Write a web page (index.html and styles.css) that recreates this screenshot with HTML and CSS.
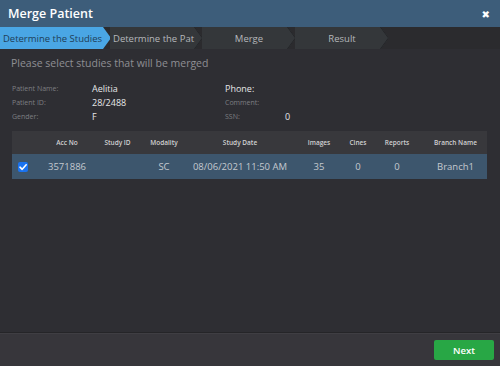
FILE: index.html
```html
<!DOCTYPE html>
<html>
<head>
<meta charset="utf-8">
<link rel="stylesheet" href="styles.css">
</head>
<body>
<div class="dialog">
  <div class="header">
    <span class="title">Merge Patient</span>
    <span class="close">&#10006;</span>
  </div>
  <div class="steps">
    <div class="step active s1"><span>Determine the Studies</span></div>
    <div class="step s2"><span>Determine the Pat</span></div>
    <div class="step s3"><span>Merge</span></div>
    <div class="step s4"><span>Result</span></div>
  </div>
  <div class="body">
    <div class="intro">Please select studies that will be merged</div>
    <div class="info">
      <div class="col">
        <div class="row"><span class="lbl">Patient Name:</span><span class="val">Aelitia</span></div>
        <div class="row"><span class="lbl">Patient ID:</span><span class="val">28/2488</span></div>
        <div class="row"><span class="lbl">Gender:</span><span class="val">F</span></div>
      </div>
      <div class="col col2">
        <div class="row"><span class="val">Phone:</span></div>
        <div class="row"><span class="lbl">Comment:</span></div>
        <div class="row"><span class="lbl">SSN:</span><span class="val">0</span></div>
      </div>
    </div>
    <table class="grid">
      <thead>
        <tr>
          <th class="c-chk"></th>
          <th class="c-acc">Acc No</th>
          <th class="c-sid">Study ID</th>
          <th class="c-mod">Modality</th>
          <th class="c-date">Study Date</th>
          <th class="c-img">Images</th>
          <th class="c-cin">Cines</th>
          <th class="c-rep">Reports</th>
          <th class="c-br">Branch Name</th>
        </tr>
      </thead>
      <tbody>
        <tr class="sel">
          <td class="c-chk"><span class="chk"><svg viewBox="0 0 10 10" width="10" height="10"><path d="M2 5.2 L4.2 7.3 L8.2 2.8" fill="none" stroke="#fff" stroke-width="1.6" stroke-linecap="round" stroke-linejoin="round"/></svg></span></td>
          <td>3571886</td>
          <td></td>
          <td>SC</td>
          <td>08/06/2021 11:50 AM</td>
          <td>35</td>
          <td>0</td>
          <td>0</td>
          <td>Branch1</td>
        </tr>
      </tbody>
    </table>
  </div>
  <div class="footer">
    <button class="next">Next</button>
  </div>
</div>
</body>
</html>
```
FILE: styles.css
```css
* { box-sizing: border-box; }
html, body { margin: 0; padding: 0; }
body {
  width: 500px;
  height: 366px;
  background: #2e2e33;
  font-family: "Open Sans", "DejaVu Sans", sans-serif;
  overflow: hidden;
}
.dialog {
  display: flex;
  flex-direction: column;
  height: 366px;
}
.header {
  height: 27px;
  background: #3d5d7a;
  display: flex;
  align-items: center;
  justify-content: space-between;
  padding: 0 10px 0 8px;
}
.title {
  color: #fff;
  font-size: 12.5px;
  font-weight: 600;
}
.close {
  color: #fff;
  font-size: 10px;
  font-weight: bold;
}
.steps {
  height: 22px;
  background: #2b2b2e;
  display: flex;
}
.step {
  position: relative;
  height: 22px;
  display: flex;
  align-items: center;
  justify-content: center;
  background: #34373a;
  color: #b5b7ba;
  font-size: 9.5px;
  clip-path: polygon(0 0, calc(100% - 8px) 0, 100% 50%, calc(100% - 8px) 100%, 0 100%);
}
.step::after {
  content: "";
  position: absolute;
  right: 0;
  top: 0;
  width: 9px;
  height: 22px;
  background: #232427;
  clip-path: polygon(0 0, 1px 0, 9px 50%, 1px 100%, 0 100%, 8px 50%);
}
.step span { white-space: nowrap; }
.step.active {
  background: #4aa6e4;
  color: #1f3e57;
}
.step.active::after { display: none; }
.s1 { width: 111px; padding-right: 6px; }
.s2 { width: 93px; margin-left: -1px; padding: 0 8px 0 3px; justify-content: flex-start; }
.s3 { width: 94px; margin-left: -1px; }
.s4 { width: 94px; margin-left: -1px; }
.body {
  flex: 1;
  padding: 0 12px;
  border-bottom: 1px solid #252528;
}
.intro {
  color: #8e8f93;
  font-size: 10.5px;
  margin: 7px 0 0 -1px;
  height: 14px;
  line-height: 14px;
}
.info {
  display: flex;
  margin-top: 11px;
}
.col { width: 213px; }
.row {
  height: 14px;
  display: flex;
  align-items: center;
}
.lbl {
  color: #7d7e82;
  font-size: 7px;
  width: 80px;
}
.col2 .lbl { width: 60px; }
.val {
  color: #e6e6e8;
  font-size: 9px;
}
.grid {
  margin-top: 8px;
  width: 475px;
  border-collapse: collapse;
  table-layout: fixed;
}
.grid th {
  background: #38383c;
  color: #d0d0d2;
  font-size: 6.5px;
  font-weight: 600;
  height: 23px;
  text-align: center;
  padding: 0;
}
.grid td {
  height: 25px;
  color: #c4c9cf;
  font-size: 9.5px;
  text-align: center;
  padding: 0;
}
.grid tr.sel { background: #3d566d; }
.c-chk { width: 27px; }
.c-acc { width: 56px; }
.c-sid { width: 45px; }
.c-mod { width: 48px; }
.c-date { width: 104px; }
.c-img { width: 54px; }
.c-cin { width: 24px; }
.c-rep { width: 54px; }
.c-br { width: 63px; }
.grid td.c-chk { text-align: left; padding-left: 6px; }
.chk {
  display: inline-flex;
  width: 10px;
  height: 10px;
  background: #1a73f0;
  border-radius: 2px;
  align-items: center;
  justify-content: center;
  vertical-align: middle;
}
.footer {
  height: 33px;
  background: #37363b;
  border-top: 1px solid #3f3e43;
  display: flex;
  justify-content: flex-end;
  align-items: center;
  padding-right: 6px;
}
.next {
  width: 60px;
  height: 20px;
  background: #28a745;
  border: none;
  border-radius: 2px;
  color: #fff;
  font-family: "Open Sans", sans-serif;
  font-size: 9.5px;
  font-weight: 600;
}
```
